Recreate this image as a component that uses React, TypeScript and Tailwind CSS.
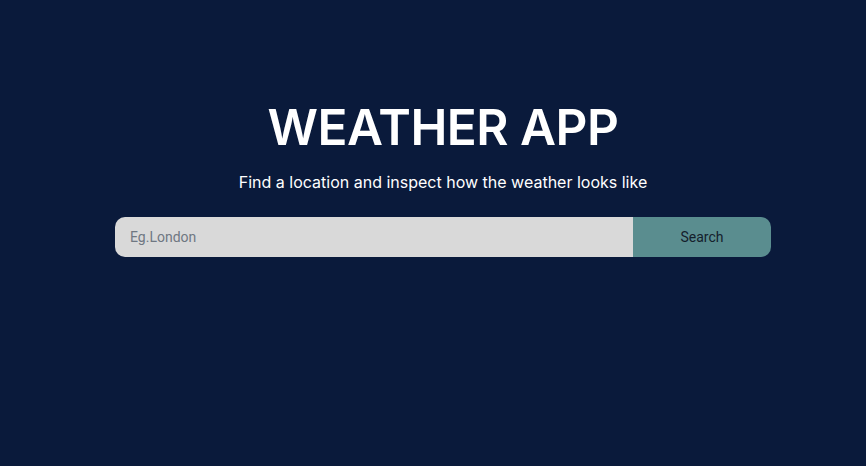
import { useState } from 'react';

const App = () => {
  const [city, setCity] = useState('');

  return (
    <div className="min-h-screen w-full bg-[#0a1a3b] pl-[20px]">
      <div className="flex flex-col items-center pt-[96px]">
        <h1 className="font-['Inter'] text-[49.5px] font-semibold leading-[62px] tracking-[-0.5px] text-white">
          WEATHER APP
        </h1>
        <p className="mt-[12px] font-['Inter'] text-[16px] leading-[24px] text-white">
          Find a location and inspect how the weather looks like
        </p>
        <form
          onSubmit={(e) => e.preventDefault()}
          className="mt-[23px] flex h-[40px] w-[656px] overflow-hidden rounded-[10px]"
        >
          <input
            value={city}
            onChange={(e) => setCity(e.target.value)}
            placeholder="Eg.London"
            className="h-full flex-1 bg-[#d9d9d9] px-[15px] font-['Roboto'] text-[14px] text-[#222] placeholder-[#6f7782] outline-none"
          />
          <button className="h-full w-[138px] bg-[#5a8d8f] font-['Roboto'] text-[14px] text-[#14202c]">
            Search
          </button>
        </form>
      </div>
    </div>
  );
};

export default App;
